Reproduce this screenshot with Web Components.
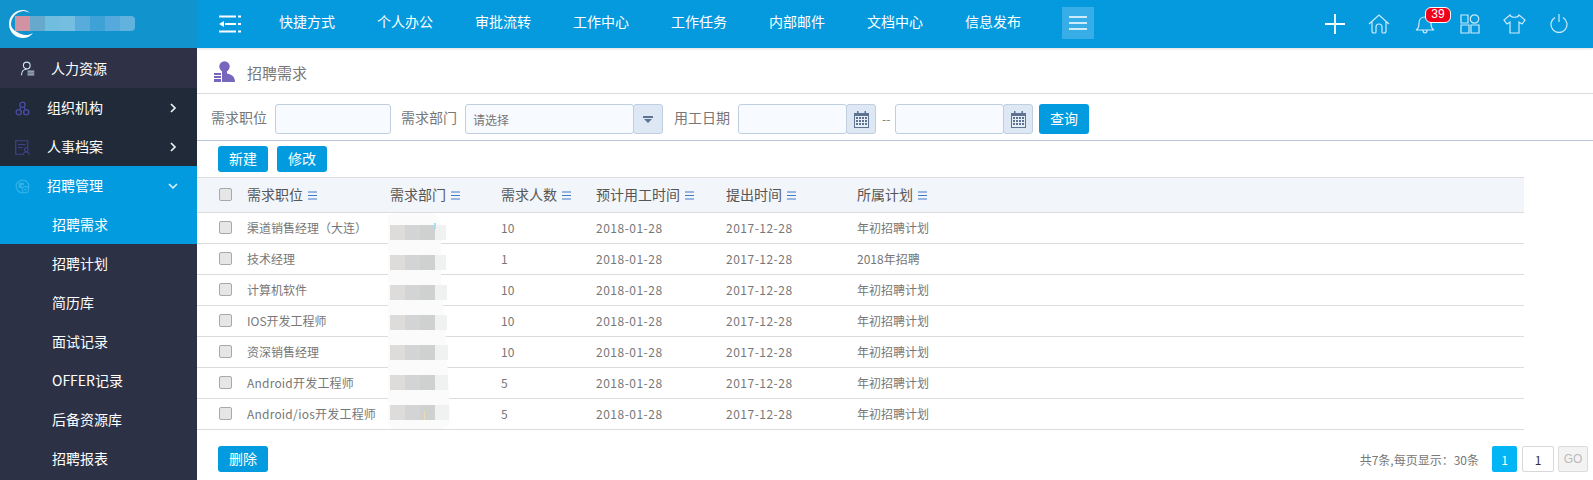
<!DOCTYPE html>
<html>
<head>
<meta charset="utf-8">
<style>
html, body { margin: 0; padding: 0; background: #fff; overflow: hidden; }
body { font-family: "Noto Sans CJK SC", "Noto Sans", sans-serif; width: 1593px; height: 480px; }
</style>
</head>
<body>
<hr-app></hr-app>
<script>
const FONT = '"Noto Sans CJK SC", "Noto Sans", sans-serif';

class HrLogo extends HTMLElement {
    constructor() {
        super();
        this.attachShadow({ mode: 'open' });
        this.shadowRoot.innerHTML = `
            <style>
                :host { display: flex; align-items: center; height: 48px; background: #1193cd; padding-left: 9px; box-sizing: border-box; }
                .mark { width: 26px; height: 28px; flex: none; margin-top: -1px; }
                .tiles { display: flex; height: 15px; margin-left: -20px; margin-top: -1px; border-radius: 0 4px 4px 0; overflow: hidden; }
                .tiles i { display: block; width: 15px; }
            </style>
            <svg class="mark" viewBox="0 0 26 28"><path d="M14 0a14 14 0 0 0 0 28c4 0 8-2 10-5-3 2-8 3-12 1C7 22 2 19 2 14S6 2 14 1c3 0 5 1 7 2-2-2-4-3-7-3z" fill="#fff"/></svg>
            <div class="tiles">
                <i style="background:#d192a2"></i><i style="background:#67a9cc"></i><i style="background:#71bde0"></i>
                <i style="background:#76bee0"></i><i style="background:#58acdb"></i><i style="background:#3fa2d6"></i>
                <i style="background:#55a9dd"></i><i style="background:#63b2dd"></i>
            </div>`;
    }
}

const NAV_ICONS = {
    user: '<circle cx="9" cy="6" r="4.500" fill="none" stroke="#cfe4f2" stroke-width="1.500"/><path d="M2 19c0-5 3-8 7-8" fill="none" stroke="#cfe4f2" stroke-width="1.500"/><path d="M10 13.500h9M10 16h9M10 18.500h9" stroke="#cfe4f2" stroke-width="1.300"/>',
    org: '<circle cx="10" cy="5" r="3.500" fill="none" stroke="#4a4ca6" stroke-width="1.800"/><circle cx="5" cy="15" r="3.500" fill="none" stroke="#4a4ca6" stroke-width="1.800"/><circle cx="15" cy="15" r="3.500" fill="none" stroke="#4a4ca6" stroke-width="1.800"/><path d="M8 8l-2 4M12 8l2 4" stroke="#4a4ca6" stroke-width="1.500"/>',
    file: '<path d="M17 10V1H1v18h9" fill="none" stroke="#41418c" stroke-width="1.600"/><path d="M4 6h10M4 10h6" stroke="#41418c" stroke-width="1.500"/><circle cx="15" cy="13" r="2.500" fill="none" stroke="#41418c" stroke-width="1.500"/><path d="M11 20c0-3 2-4 4-4s4 1 4 4" fill="none" stroke="#41418c" stroke-width="1.500"/>',
    recruit: '<circle cx="10" cy="10" r="8.500" fill="none" stroke="#2fb2e8" stroke-width="1.600"/><path d="M5 5h7v3H9v4H5z" fill="#2fb2e8"/><circle cx="14" cy="14" r="4.200" fill="#039bdf" stroke="#2fb2e8" stroke-width="1.500"/><circle cx="14" cy="14" r="1.500" fill="#2fb2e8"/>'
};

class NavItem extends HTMLElement {
    constructor() {
        super();
        this.attachShadow({ mode: 'open' });
    }

    connectedCallback() {
        const icon = this.getAttribute('icon');
        const arrow = this.getAttribute('arrow');
        const left = this.getAttribute('left') || '47';
        const iconX = this.getAttribute('icon-x') || '15';
        let arrowSvg = '';
        if (arrow == 'right') {
            arrowSvg = '<svg class="arrow" width="10" height="10" viewBox="0 0 10 10"><path d="M3 1l4 4-4 4" fill="none" stroke="#e8f4fb" stroke-width="1.7"/></svg>';
        }
        if (arrow == 'down') {
            arrowSvg = '<svg class="arrow" width="10" height="10" viewBox="0 0 10 10"><path d="M1 3l4 4 4-4" fill="none" stroke="#e8f4fb" stroke-width="1.5"/></svg>';
        }
        this.shadowRoot.innerHTML = `
            <style>
                :host { display: flex; align-items: center; height: var(--h, 39px); color: #fff; font-size: 14px; position: relative; padding-left: ${left}px; padding-bottom: var(--pb, 2px); box-sizing: border-box; }
                svg.ic { position: absolute; left: ${iconX}px; top: 50%; margin-top: -7px; }
                .arrow { position: absolute; left: 168px; top: 50%; margin-top: -5px; }
            </style>
            ${icon ? `<svg class="ic" width="15" height="15" viewBox="0 0 20 20">${NAV_ICONS[icon]}</svg>` : ''}
            <slot></slot>
            ${arrowSvg}`;
    }
}

class SideBar extends HTMLElement {
    constructor() {
        super();
        this.attachShadow({ mode: 'open' });
        this.shadowRoot.innerHTML = `
            <style>
                :host { display: block; width: 197px; flex: none; height: 480px; background: #2d3146; overflow: hidden; }
                .root { --h: 40px; --pb: 0px; background: #2f3247; }
                .dark { background: #212a38; }
                .on { background: #039bdf; }
            </style>
            <hr-logo></hr-logo>
            <nav-item class="root" icon="user" left="51" icon-x="20">人力资源</nav-item>
            <div class="dark">
                <nav-item icon="org" arrow="right">组织机构</nav-item>
                <nav-item icon="file" arrow="right">人事档案</nav-item>
            </div>
            <div class="on">
                <nav-item icon="recruit" arrow="down">招聘管理</nav-item>
                <nav-item left="52">招聘需求</nav-item>
            </div>
            <nav-item left="52">招聘计划</nav-item>
            <nav-item left="52">简历库</nav-item>
            <nav-item left="52">面试记录</nav-item>
            <nav-item left="52">OFFER记录</nav-item>
            <nav-item left="52">后备资源库</nav-item>
            <nav-item left="52">招聘报表</nav-item>`;
    }
}

class TopBar extends HTMLElement {
    constructor() {
        super();
        this.attachShadow({ mode: 'open' });
        const items = ['快捷方式', '个人办公', '审批流转', '工作中心', '工作任务', '内部邮件', '文档中心', '信息发布'];
        this.shadowRoot.innerHTML = `
            <style>
                :host { display: flex; align-items: center; height: 48px; background: #059ade; color: #fff; font-size: 14px; box-shadow: 0 1px 2px rgba(0,0,0,.12); position: relative; }
                .toggle { margin-left: 22px; width: 22px; height: 18px; flex: none; margin-top: -1px; }
                .items { display: flex; margin-left: 38px; gap: 42px; padding-bottom: 6px; }
                .items span { width: 56px; white-space: nowrap; }
                .burger { margin-left: 41px; width: 32px; height: 32px; background: #38aee8; display: flex; align-items: center; justify-content: center; flex: none; margin-top: -2px; }
                .tools { margin-left: auto; display: flex; align-items: center; padding-right: 25px; }
                .tools svg { display: block; fill: none; stroke: #cdeafa; stroke-width: 1.2; flex: none; }
                .bell { position: relative; margin-left: 25px; width: 20px; height: 22px; }
                .badge { position: absolute; left: 10px; top: -6px; box-sizing: border-box; background: #f00019; border: 1.5px solid #fff; border-radius: 6px; color: #fff; font: 12px/13px "Liberation Sans", sans-serif; width: 26px; height: 16px; text-align: center; }
            </style>
            <svg class="toggle" viewBox="0 0 22 18">
                <path d="M0 1.500h17M6 9h11M0 16.500h17" stroke="#fff" stroke-width="2.200" fill="none"/>
                <path d="M19 .5h3v2h-3zM19 8h3v2h-3zM19 15.500h3v2h-3z" fill="#fff"/>
                <path d="M5 6L0 9l5 3z" fill="#fff"/>
            </svg>
            <div class="items">${items.map(t => `<span>${t}</span>`).join('')}</div>
            <div class="burger">
                <svg width="18" height="14" viewBox="0 0 18 14"><path d="M0 1h18M0 7h18M0 13h18" stroke="#fff" stroke-width="1.4"/></svg>
            </div>
            <div class="tools">
                <svg width="20" height="20" viewBox="0 0 20 20" style="stroke:#fff;stroke-width:1.8"><path d="M10 0v20M0 10h20"/></svg>
                <svg width="22" height="20" viewBox="0 0 22 20" style="margin-left:23px"><path d="M1 10L11 1l10 9M4 8v9c0 1 1 2 2 2h1c1 0 1-1 1-1v-5c0-4 6-4 6 0v5s0 1 1 1h1c1 0 2-1 2-2V8"/></svg>
                <div class="bell">
                    <svg width="20" height="22" viewBox="0 0 20 22"><path d="M1 17c2-1 3-3 3-7 0-4 3-6 6-6s6 2 6 6c0 4 1 6 3 7zM8 17c0 4 4 4 4 0"/></svg>
                    <span class="badge">39</span>
                </div>
                <svg width="20" height="20" viewBox="0 0 20 20" style="margin-left:25px"><path d="M1 1h7v8H1zM1 11h8v8H1zM11 11h8v8h-8z"/><circle cx="14.500" cy="5" r="4.200"/></svg>
                <svg width="23" height="20" viewBox="0 0 23 20" style="margin-left:23px"><path d="M7 1L1 6l3 4 3-2v11h9V8l3 2 3-4-6-5c-1 3-8 3-9 0z"/></svg>
                <svg width="18" height="20" viewBox="0 0 18 20" style="margin-left:24px"><path d="M9 0v8M5 3.500a8 8 0 1 0 8 0"/></svg>
            </div>`;
    }
}

class BlueButton extends HTMLElement {
    constructor() {
        super();
        this.attachShadow({ mode: 'open' });
        this.shadowRoot.innerHTML = `
            <style>
                :host { display: inline-flex; align-items: center; justify-content: center; width: 50px; height: var(--bh, 26px); background: #039bdf; color: #fff; font-size: 14px; border-radius: 3px; flex: none; box-sizing: border-box; padding-bottom: 2px; }
            </style>
            <slot></slot>`;
    }
}

const CALENDAR = `<svg width="15" height="17" viewBox="0 0 15 17"><path d="M0 2h15v15H0z" fill="#5d7391"/><path d="M3 0h1.500v3H3zM10.500 0H12v3h-1.500z" fill="#5d7391"/><path d="M1 5h13v11H1z" fill="#e8eef6"/><path d="M2 6h2v2H2zM5 6h2v2H5zM8 6h2v2H8zM11 6h2v2h-2zM2 9h2v2H2zM5 9h2v2H5zM8 9h2v2H8zM11 9h2v2h-2zM2 12h2v2H2zM5 12h2v2H5zM8 12h2v2H8zM11 12h2v2h-2z" fill="#5d7391"/></svg>`;

class FilterField extends HTMLElement {
    constructor() {
        super();
        this.attachShadow({ mode: 'open' });
    }

    connectedCallback() {
        const kind = this.getAttribute('kind');
        const w = this.getAttribute('width');
        const text = this.getAttribute('placeholder') || '';
        let add = '';
        if (kind == 'select') {
            add = '<div class="add"><svg width="10" height="7" viewBox="0 0 10 7"><path d="M0 0h10v2H0zM1 3h8L5 7z" fill="#5d7391"/></svg></div>';
        }
        if (kind == 'date') {
            add = `<div class="add">${CALENDAR}</div>`;
        }
        this.shadowRoot.innerHTML = `
            <style>
                :host { display: flex; height: 30px; width: ${w}px; flex: none; box-sizing: border-box; }
                .box { flex: 1; background: #f7fafe; border: 1px solid #bfcfe0; border-radius: 3px; font-size: 12px; color: #777; padding: 2px 0 0 7px; box-sizing: border-box; line-height: 26px; }
                .add { width: 30px; flex: none; margin-left: -1px; background: #dee8f4; border: 1px solid #bfcfe0; border-radius: 3px; display: flex; align-items: center; justify-content: center; box-sizing: border-box; }
            </style>
            <div class="box">${text}</div>${add}`;
    }
}

class FilterBar extends HTMLElement {
    constructor() {
        super();
        this.attachShadow({ mode: 'open' });
        this.shadowRoot.innerHTML = `
            <style>
                :host { display: flex; align-items: center; height: 47px; box-sizing: border-box; border-bottom: 1px solid #b8c8dc; padding: 4px 0 0 14px; font-size: 14px; color: #777; }
                span { flex: none; margin-bottom: 4px; }
                .dash { font-size: 12px; width: 13px; margin-left: 6px; margin-bottom: 2px; }
            </style>
            <span>需求职位</span>
            <filter-field width="116" style="margin-left:8px"></filter-field>
            <span style="margin-left:10px">需求部门</span>
            <filter-field kind="select" width="198" placeholder="请选择" style="margin-left:8px"></filter-field>
            <span style="margin-left:11px">用工日期</span>
            <filter-field kind="date" width="138" style="margin-left:8px"></filter-field>
            <span class="dash">--</span>
            <filter-field kind="date" width="138"></filter-field>
            <blue-button style="--bh:30px;margin-left:6px">查询</blue-button>`;
    }
}

const LIST_ICON = `<svg width="9" height="9" viewBox="0 0 9 9"><path d="M0 1h9M0 4.500h9M0 8h9" stroke="#3f78c8" stroke-width="1"/></svg>`;

class DataTable extends HTMLElement {
    constructor() {
        super();
        this.attachShadow({ mode: 'open' });
        const cols = ['需求职位', '需求部门', '需求人数', '预计用工时间', '提出时间', '所属计划'];
        const rows = [
            ['渠道销售经理（大连）', '10', '2018-01-28', '2017-12-28', '年初招聘计划'],
            ['技术经理', '1', '2018-01-28', '2017-12-28', '2018年招聘'],
            ['计算机软件', '10', '2018-01-28', '2017-12-28', '年初招聘计划'],
            ['IOS开发工程师', '10', '2018-01-28', '2017-12-28', '年初招聘计划'],
            ['资深销售经理', '10', '2018-01-28', '2017-12-28', '年初招聘计划'],
            ['Android开发工程师', '5', '2018-01-28', '2017-12-28', '年初招聘计划'],
            ['Android/ios开发工程师', '5', '2018-01-28', '2017-12-28', '年初招聘计划']
        ];
        const box = '<i class="check"></i>';
        let bands = '';
        for (let i = 0; i < 7; i++) {
            const y = 12 + i * 30;
            bands += `<rect x="2" y="${y}" width="15" height="15" fill="#dedcda"/><rect x="17" y="${y}" width="15" height="15" fill="#d3d4d6"/><rect x="32" y="${y}" width="15" height="15" fill="#cfd1d0"/><rect x="47" y="${y}" width="${11 + Math.floor(i / 2)}" height="15" fill="#f0f2f2"/>`;
        }
        const cell = c => `<span class="${/^\d{4}-/.test(c) ? 'date' : ''}">${c}</span>`;
        this.shadowRoot.innerHTML = `
            <style>
                :host { display: block; position: relative; width: 1327px; font-size: 12px; color: #777; }
                .row { display: grid; grid-template-columns: 50px 143px 111px 95px 130px 131px 1fr; align-items: center; height: 31px; box-sizing: border-box; border-bottom: 1px solid #dcdcdc; white-space: nowrap; padding-bottom: 2px; }
                .head { height: 36px; background: #f2f5fa; border-top: 1px solid #dcdcdc; font-size: 14px; color: #555; }
                .head svg { margin-left: 5px; }
                .check { display: block; width: 11px; height: 11px; margin-left: 22px; background: #e6e6e6; border: 1px solid #a9a9a9; border-radius: 2px; }
                .date { letter-spacing: .5px; }
                .wide { letter-spacing: .2px; }
                .mask { position: absolute; left: 191px; top: 36px; width: 62px; height: 216px; }
            </style>
            <div class="row head">${box}${cols.map(c => `<span>${c}${LIST_ICON}</span>`).join('')}</div>
            ${rows.map(r => `<div class="row">${box}<span class="${r[0].startsWith('Android') ? 'wide' : ''}">${r[0]}</span><span></span>${r.slice(1).map(cell).join('')}</div>`).join('')}
            <svg class="mask" viewBox="0 0 62 216">
                <path d="M0 2L14 0h30l9 8v60l5 60 4 70v12l-8 6H6l-6-6z" fill="#fbfbfb"/>
                ${bands}
                <rect x="46" y="10" width="2" height="6" fill="#a8ddf8"/>
                <rect x="36" y="198" width="1" height="9" fill="#efdcae"/>
            </svg>`;
    }
}

class PagerBar extends HTMLElement {
    constructor() {
        super();
        this.attachShadow({ mode: 'open' });
        this.shadowRoot.innerHTML = `
            <style>
                :host { display: flex; align-items: center; height: 26px; margin-top: 16px; padding: 0 5px 0 21px; font-size: 12px; color: #777; }
                .total { margin-left: auto; margin-right: 13px; }
                .cur, .inp, .go { height: 26px; box-sizing: border-box; display: flex; align-items: center; justify-content: center; font-size: 12px; flex: none; }
                .cur { width: 25px; background: #02b5f4; color: #fff; border-radius: 2px; }
                .inp { width: 32px; margin-left: 5px; border: 1px solid #d8d8d8; color: #333; border-radius: 2px; }
                .go { width: 30px; margin-left: 4px; border: 1px solid #dcdcdc; background: #f3f3f3; color: #bbb; font-family: "Liberation Sans", sans-serif; border-radius: 2px; }
            </style>
            <blue-button>删除</blue-button>
            <span class="total">共7条,每页显示：30条</span>
            <div class="cur">1</div><div class="inp">1</div><div class="go">GO</div>`;
    }
}

class MainPanel extends HTMLElement {
    constructor() {
        super();
        this.attachShadow({ mode: 'open' });
        this.shadowRoot.innerHTML = `
            <style>
                :host { display: block; flex: 1; min-width: 0; height: 480px; overflow: hidden; }
                .title { display: flex; align-items: center; height: 46px; box-sizing: border-box; border-bottom: 1px solid #dcdcdc; padding: 3px 0 0 17px; font-size: 15px; color: #777; }
                .title svg { margin-right: 12px; margin-top: -1px; }
                .actions { display: flex; gap: 9px; padding: 5px 0 5px 21px; }
            </style>
            <top-bar></top-bar>
            <div class="title">
                <svg width="21" height="21" viewBox="0 0 21 21"><circle cx="10.500" cy="5.500" r="5.200" fill="#7766bb"/><path d="M8 10h5v2.500c3 .5 8 2 8 8.500H8z" fill="#7766bb"/><path d="M0 12h7v2H0zM0 15h7v2H0zM0 18h7v3H0z" fill="#7766bb"/></svg>
                招聘需求
            </div>
            <filter-bar></filter-bar>
            <div class="actions"><blue-button>新建</blue-button><blue-button>修改</blue-button></div>
            <data-table></data-table>
            <pager-bar></pager-bar>`;
    }
}

class HrApp extends HTMLElement {
    constructor() {
        super();
        this.attachShadow({ mode: 'open' });
        this.shadowRoot.innerHTML = `
            <style>
                :host { display: flex; width: 1593px; height: 480px; overflow: hidden; font-family: ${FONT}; }
            </style>
            <side-bar></side-bar>
            <main-panel></main-panel>`;
    }
}

customElements.define('hr-logo', HrLogo);
customElements.define('nav-item', NavItem);
customElements.define('side-bar', SideBar);
customElements.define('top-bar', TopBar);
customElements.define('blue-button', BlueButton);
customElements.define('filter-field', FilterField);
customElements.define('filter-bar', FilterBar);
customElements.define('data-table', DataTable);
customElements.define('pager-bar', PagerBar);
customElements.define('main-panel', MainPanel);
customElements.define('hr-app', HrApp);
</script>
</body>
</html>
